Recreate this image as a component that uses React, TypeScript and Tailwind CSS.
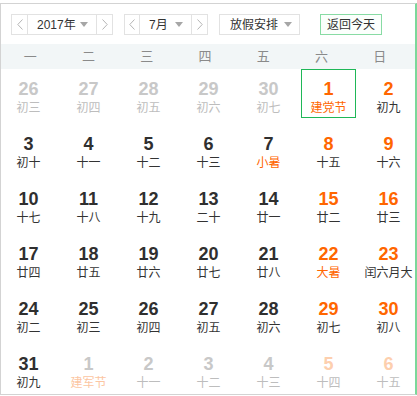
import React from 'react';

type Day = {
  n: number;
  l: string;
  kind?: 'prev' | 'next';
  weekend?: boolean;
  fest?: boolean;
  sel?: boolean;
};

const WEEK = ['一', '二', '三', '四', '五', '六', '日'];

const rows: Day[][] = [
  [
    { n: 26, l: '初三', kind: 'prev' },
    { n: 27, l: '初四', kind: 'prev' },
    { n: 28, l: '初五', kind: 'prev' },
    { n: 29, l: '初六', kind: 'prev' },
    { n: 30, l: '初七', kind: 'prev' },
    { n: 1, l: '建党节', weekend: true, fest: true, sel: true },
    { n: 2, l: '初九', weekend: true },
  ],
  [
    { n: 3, l: '初十' },
    { n: 4, l: '十一' },
    { n: 5, l: '十二' },
    { n: 6, l: '十三' },
    { n: 7, l: '小暑', fest: true },
    { n: 8, l: '十五', weekend: true },
    { n: 9, l: '十六', weekend: true },
  ],
  [
    { n: 10, l: '十七' },
    { n: 11, l: '十八' },
    { n: 12, l: '十九' },
    { n: 13, l: '二十' },
    { n: 14, l: '廿一' },
    { n: 15, l: '廿二', weekend: true },
    { n: 16, l: '廿三', weekend: true },
  ],
  [
    { n: 17, l: '廿四' },
    { n: 18, l: '廿五' },
    { n: 19, l: '廿六' },
    { n: 20, l: '廿七' },
    { n: 21, l: '廿八' },
    { n: 22, l: '大暑', weekend: true, fest: true },
    { n: 23, l: '闰六月大', weekend: true },
  ],
  [
    { n: 24, l: '初二' },
    { n: 25, l: '初三' },
    { n: 26, l: '初四' },
    { n: 27, l: '初五' },
    { n: 28, l: '初六' },
    { n: 29, l: '初七', weekend: true },
    { n: 30, l: '初八', weekend: true },
  ],
  [
    { n: 31, l: '初九' },
    { n: 1, l: '建军节', kind: 'next', fest: true },
    { n: 2, l: '十一', kind: 'next' },
    { n: 3, l: '十二', kind: 'next' },
    { n: 4, l: '十三', kind: 'next' },
    { n: 5, l: '十四', kind: 'next', weekend: true },
    { n: 6, l: '十五', kind: 'next', weekend: true },
  ],
];

const Chevron = ({ dir }: { dir: 'l' | 'r' }) => (
  <svg width="6" height="11" viewBox="0 0 6 11" fill="none">
    <polyline
      points={dir === 'l' ? '5.5,0.5 0.8,5.5 5.5,10.5' : '0.5,0.5 5.2,5.5 0.5,10.5'}
      stroke="#b5b5b5"
      strokeWidth="1"
    />
  </svg>
);

const Caret = () => (
  <svg width="8" height="5" viewBox="0 0 8 5">
    <polygon points="0,0 8,0 4,5" fill="#a6a6a6" />
  </svg>
);

const DayCell = ({ d }: { d: Day }) => {
  let num = 'text-[#2f2f2f]';
  let lun = 'text-[#333]';
  if (d.kind) {
    num = d.weekend ? 'text-[#fdcfae]' : 'text-[#c8c8c8]';
    lun = d.fest ? 'text-[#fcc6a2]' : 'text-[#bdbdbd]';
  } else {
    if (d.weekend) num = 'text-[#ff6600]';
    if (d.fest) lun = 'text-[#ff6600]';
  }
  return (
    <div className="h-[49px] flex flex-col items-center pt-[9px] relative">
      {d.sel && <div className="absolute inset-0 border border-[#1fb757]" />}
      <span className={`text-[18px] leading-[22px] font-bold ${num}`}>{d.n}</span>
      <span className={`text-[12px] leading-[16px] whitespace-nowrap ${lun}`}>{d.l}</span>
    </div>
  );
};

export default function App() {
  return (
    <div
      className="bg-white h-[396px] pt-[3px] text-[#333]"
      style={{ fontFamily: '"Liberation Sans", Arial, "Noto Sans CJK SC", sans-serif' }}
    >
      <div className="h-[392px] border border-[#d3d3d3] border-r-2 border-r-[#7bd89a] overflow-hidden">
        {/* toolbar */}
        <div className="flex items-center h-[21px] mt-[10px] ml-[10px] text-[12px] whitespace-nowrap">
          <div className="flex h-full border border-[#e2e2e2] divide-x divide-[#e2e2e2]">
            <div className="w-[16px] flex items-center justify-center"><Chevron dir="l" /></div>
            <div className="w-[69px] flex items-center pl-[9px] pr-[8px] justify-between">
              <span>2017年</span>
              <Caret />
            </div>
            <div className="w-[15px] flex items-center justify-center"><Chevron dir="r" /></div>
          </div>
          <div className="flex h-full ml-[11px] border border-[#e2e2e2] divide-x divide-[#e2e2e2]">
            <div className="w-[15px] flex items-center justify-center"><Chevron dir="l" /></div>
            <div className="w-[52px] flex items-center pl-[9px] pr-[8px] justify-between">
              <span>7月</span>
              <Caret />
            </div>
            <div className="w-[15px] flex items-center justify-center"><Chevron dir="r" /></div>
          </div>
          <div className="flex items-center justify-between h-full ml-[11px] w-[81px] pl-[10px] pr-[7px] border border-[#e2e2e2]">
            <span>放假安排</span>
            <Caret />
          </div>
          <button className="h-full ml-[20px] w-[62px] border border-[#88dba4] bg-[#fbfffc] text-[12px] text-[#333] flex items-center justify-center">
            返回今天
          </button>
        </div>

        {/* week header */}
        <div className="grid grid-cols-7 h-[25px] mt-[9px] bg-[#f2f6f7] pr-[6px] text-[13px] text-[#8a8a8a]">
          {WEEK.map((w) => (
            <div key={w} className="flex items-center justify-center">{w}</div>
          ))}
        </div>

        {/* days */}
        <div className="grid grid-cols-[repeat(7,55px)] gap-x-[5px] gap-y-[6px]">
          {rows.flat().map((d, i) => (
            <DayCell key={i} d={d} />
          ))}
        </div>
      </div>
    </div>
  );
}
